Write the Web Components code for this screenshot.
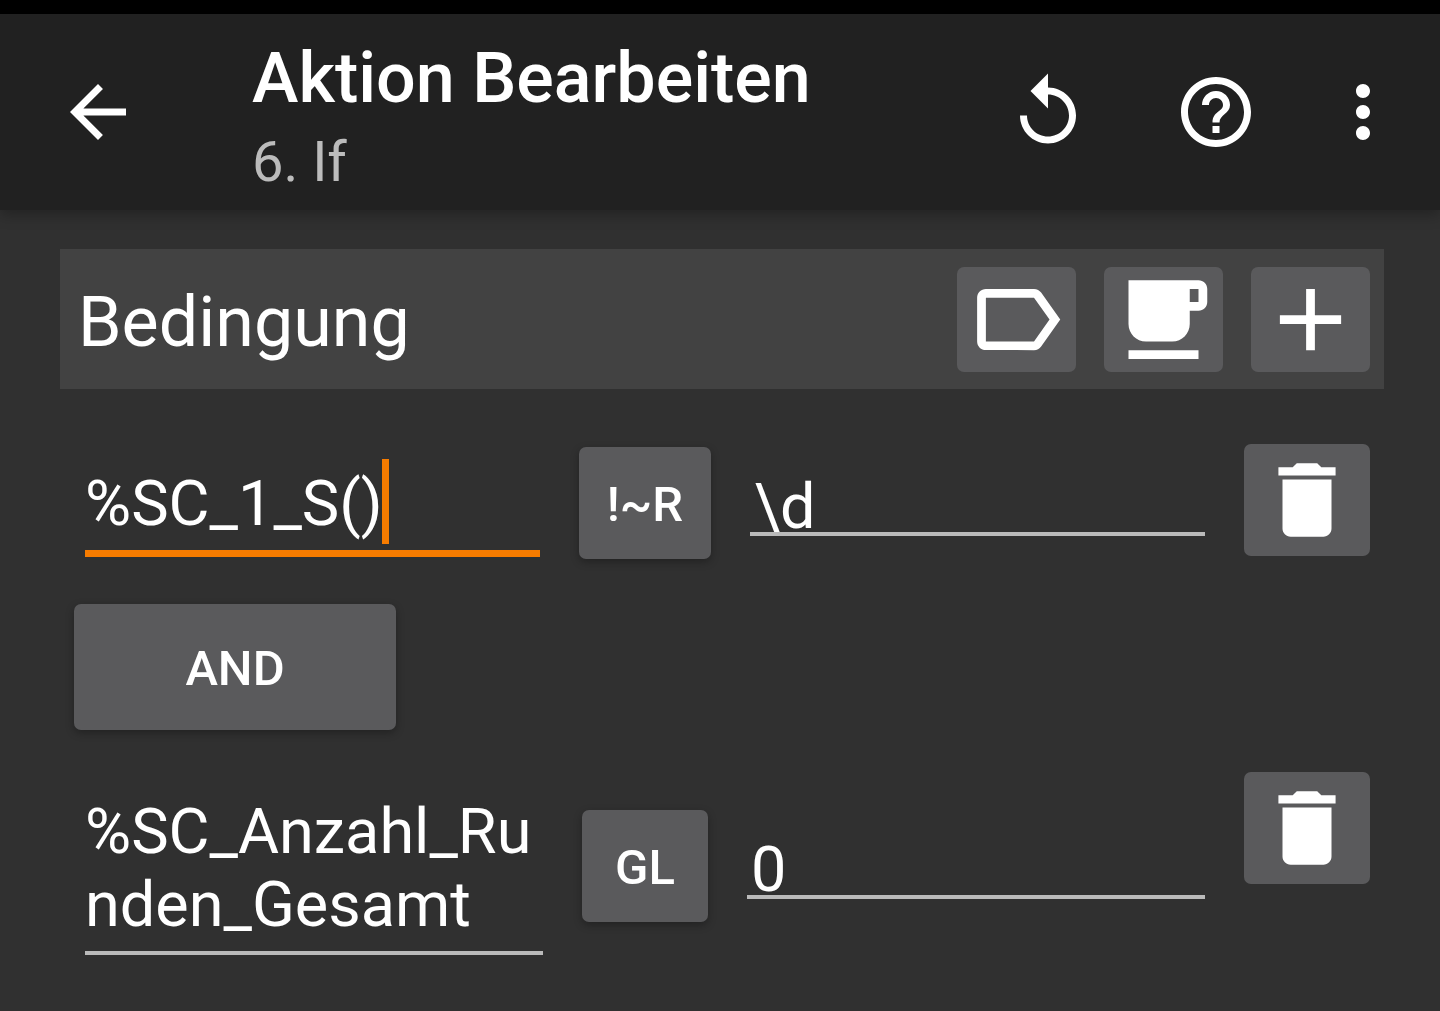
<!DOCTYPE html>
<html lang="de">
<head>
<meta charset="utf-8">
<meta name="viewport" content="width=device-width, initial-scale=1">
<title>Aktion Bearbeiten</title>
<style>
  body {
    margin: 0;
    min-height: 100vh;
    background: #303030;
    color: #fff;
    font-family: Roboto, sans-serif;
    --accent: #f77c00;
    --button: #5a5a5c;
    --line: #bababa;
  }
</style>
</head>
<body>
<te-page>
  <te-app-bar slot="bar">
    <te-tool-button slot="nav" icon="back" label="Zurück"></te-tool-button>
    <span slot="title">Aktion Bearbeiten</span>
    <span slot="subtitle">6. If</span>
    <te-tool-button icon="replay" label="Wiederherstellen"></te-tool-button>
    <te-tool-button icon="help" label="Hilfe"></te-tool-button>
    <te-tool-button class="last" icon="more" label="Weitere Optionen"></te-tool-button>
  </te-app-bar>

  <te-section-head>
    <span slot="title">Bedingung</span>
    <te-button size="small" icon="tag" label="Label"></te-button>
    <te-button size="small" icon="cup" label="Variable"></te-button>
    <te-button size="small" icon="plus" label="Hinzufügen"></te-button>
  </te-section-head>

  <te-conditions>
    <te-condition>
      <te-field lines="1" active value="%SC_1_S()" label="Linker Wert"></te-field>
      <te-button raised>!~R</te-button>
      <te-value value="\d" label="Rechter Wert"></te-value>
      <te-button slot="end" icon="trash" label="Löschen"></te-button>
    </te-condition>
    <te-button size="wide" raised>AND</te-button>
    <te-condition>
      <te-field lines="2" value="%SC_Anzahl_Runden_Gesamt" label="Linker Wert"></te-field>
      <te-button raised>GL</te-button>
      <te-value value="0" label="Rechter Wert"></te-value>
      <te-button slot="end" icon="trash" label="Löschen"></te-button>
    </te-condition>
  </te-conditions>
</te-page>

<script>
const ICONS = {
  back: "M20 11H7.83l5.59-5.59L12 4l-8 8 8 8 1.41-1.41L7.83 13H20v-2z",
  replay: "M12 5V1L7 6l5 5V7c3.31 0 6 2.69 6 6s-2.69 6-6 6-6-2.69-6-6H4c0 4.42 3.58 8 8 8s8-3.58 8-8-3.58-8-8-8z",
  help: "M11 18h2v-2h-2v2zm1-16C6.48 2 2 6.48 2 12s4.48 10 10 10 10-4.48 10-10S17.52 2 12 2zm0 18c-4.41 0-8-3.59-8-8s3.59-8 8-8 8 3.59 8 8-3.59 8-8 8zm0-14c-2.21 0-4 1.79-4 4h2c0-1.1.9-2 2-2s2 .9 2 2c0 2-3 1.75-3 5h2c0-2.25 3-2.5 3-5 0-2.21-1.79-4-4-4z",
  more: "M12 8c1.1 0 2-.9 2-2s-.9-2-2-2-2 .9-2 2 .9 2 2 2zm0 2c-1.1 0-2 .9-2 2s.9 2 2 2 2-.9 2-2-.9-2-2-2zm0 6c-1.1 0-2 .9-2 2s.9 2 2 2 2-.9 2-2-.9-2-2-2z",
  tag: "M17.63 5.84C17.27 5.33 16.67 5 16 5L5 5.01C3.9 5.01 3 5.9 3 7v10c0 1.1.9 1.99 2 1.99L16 19c.67 0 1.27-.33 1.63-.84L22 12l-4.37-6.16zM16 17H5V7h11l3.55 5L16 17z",
  cup: "M20 3H4v10c0 2.21 1.79 4 4 4h6c2.21 0 4-1.79 4-4v-3h2c1.11 0 2-.9 2-2V5c0-1.11-.89-2-2-2zm0 5h-2V5h2v3zM4 19h16v2H4z",
  plus: "M19 13h-6v6h-2v-6H5v-2h6V5h2v6h6v2z",
  trash: "M6 19c0 1.1.9 2 2 2h8c1.1 0 2-.9 2-2V7H6v12zM19 4h-3.5l-1-1h-5l-1 1H5v2h14V4z"
};

function iconSvg(name) {
  return `<svg viewBox="0 0 24 24" aria-hidden="true"><path d="${ICONS[name]}"/></svg>`;
}

class Page extends HTMLElement {
  constructor() {
    super();
    this.attachShadow({ mode: "open" });
    this.shadowRoot.innerHTML = `
    <style>
      :host {
        display: block;
      }
      .status {
        height: 14px;
        background: #000;
      }
      main {
        padding: 39px 56px 42px 60px;
      }
    </style>
    <div class="status"></div>
    <slot name="bar"></slot>
    <main><slot></slot></main>
    `;
  }
}

class AppBar extends HTMLElement {
  constructor() {
    super();
    this.attachShadow({ mode: "open" });
    this.shadowRoot.innerHTML = `
    <style>
      :host {
        display: block;
      }
      header {
        display: flex;
        align-items: center;
        min-height: 196px;
        background: #212121;
        box-shadow: 0 4px 14px rgba(0, 0, 0, 0.3);
      }
      .text {
        flex: 1;
        padding: 8px 0 0 56px;
      }
      h1, p {
        margin: 0;
      }
      h1 {
        font-size: 70px;
        font-weight: 500;
        line-height: 82px;
      }
      p {
        margin-top: 10px;
        font-size: 56px;
        line-height: 66px;
        color: #bcbcbc;
      }
      ::slotted(.last) {
        --pad: 35px 35px 35px 21px;
      }
    </style>
    <header>
      <slot name="nav"></slot>
      <div class="text">
        <h1><slot name="title"></slot></h1>
        <p><slot name="subtitle"></slot></p>
      </div>
      <slot></slot>
    </header>
    `;
  }
}

class ToolButton extends HTMLElement {
  constructor() {
    super();
    this.attachShadow({ mode: "open" });
    this.shadowRoot.innerHTML = `
    <style>
      :host {
        display: block;
      }
      :host([slot="nav"]) {
        --pad: 42px 56px;
      }
      button {
        display: block;
        padding: var(--pad, 42px);
        border: 0;
        background: none;
        color: inherit;
      }
      svg {
        display: block;
        width: 84px;
        fill: currentColor;
      }
    </style>
    <button type="button"></button>
    `;
  }

  connectedCallback() {
    const button = this.shadowRoot.querySelector("button");
    button.setAttribute("aria-label", this.getAttribute("label"));
    button.innerHTML = iconSvg(this.getAttribute("icon"));
  }
}

class SectionHead extends HTMLElement {
  constructor() {
    super();
    this.attachShadow({ mode: "open" });
    this.shadowRoot.innerHTML = `
    <style>
      :host {
        display: flex;
        align-items: center;
        gap: 28px;
        min-height: 140px;
        padding: 0 14px 0 18px;
        box-sizing: border-box;
        background: #424242;
      }
      h2 {
        flex: 1;
        margin: 0;
        padding-top: 6px;
        font-size: 70px;
        font-weight: 400;
        line-height: 82px;
      }
    </style>
    <h2><slot name="title"></slot></h2>
    <slot></slot>
    `;
  }
}

class Button extends HTMLElement {
  constructor() {
    super();
    this.attachShadow({ mode: "open" });
    this.shadowRoot.innerHTML = `
    <style>
      :host {
        display: block;
        flex: none;
      }
      button {
        display: flex;
        align-items: center;
        justify-content: center;
        min-width: 126px;
        height: 112px;
        padding: 4px 28px 0;
        border: 0;
        border-radius: 7px;
        background: var(--button);
        color: inherit;
        font: 500 49px/58px Roboto, sans-serif;
      }
      svg {
        width: 98px;
        flex: none;
        fill: currentColor;
      }
      :host([icon]) button {
        padding: 0 14px;
      }
      :host([raised]) button {
        box-shadow: 0 3px 8px rgba(0, 0, 0, 0.3);
      }
      :host([size="small"]) button {
        min-width: 119px;
        height: 105px;
        padding: 0 7px;
      }
      :host([size="small"]) svg {
        width: 105px;
      }
      :host([size="wide"]) button {
        min-width: 322px;
        height: 126px;
      }
    </style>
    <button type="button"><slot></slot></button>
    `;
  }

  connectedCallback() {
    const button = this.shadowRoot.querySelector("button");
    if (this.hasAttribute("icon")) {
      button.setAttribute("aria-label", this.getAttribute("label"));
      button.innerHTML = iconSvg(this.getAttribute("icon"));
    }
  }
}

class Conditions extends HTMLElement {
  constructor() {
    super();
    this.attachShadow({ mode: "open" });
    this.shadowRoot.innerHTML = `
    <style>
      :host {
        display: flex;
        flex-direction: column;
        align-items: flex-start;
        gap: 42px;
        padding: 55px 14px 0;
      }
    </style>
    <slot></slot>
    `;
  }
}

class Condition extends HTMLElement {
  constructor() {
    super();
    this.attachShadow({ mode: "open" });
    this.shadowRoot.innerHTML = `
    <style>
      :host {
        display: flex;
        align-items: center;
        align-self: stretch;
        gap: 39px;
        padding-left: 11px;
      }
      ::slotted([slot="end"]) {
        align-self: flex-start;
      }
    </style>
    <slot></slot>
    <slot name="end"></slot>
    `;
  }
}

// Wrapping text box, shows a thick caret while active
class Field extends HTMLElement {
  constructor() {
    super();
    this.attachShadow({ mode: "open" });
    this.shadowRoot.innerHTML = `
    <style>
      :host {
        display: block;
        position: relative;
        flex: 1 1 0;
        min-width: 0;
        margin: 5px 0;
      }
      textarea {
        display: block;
        box-sizing: content-box;
        width: 100%;
        margin: 0;
        padding: 18px 0 10px;
        border: 0;
        border-bottom: 4px solid var(--line);
        outline: 0;
        overflow: hidden;
        resize: none;
        background: none;
        color: inherit;
        font: 400 63px/73px Roboto, sans-serif;
        word-break: break-all;
      }
      :host([active]) textarea {
        border-bottom: 7px solid var(--accent);
        caret-color: transparent;
      }
      i {
        display: none;
        position: absolute;
        top: 10px;
        width: 7px;
        height: 85px;
        background: var(--accent);
      }
      :host([active]) i {
        display: block;
      }
    </style>
    <textarea spellcheck="false"></textarea>
    <i></i>
    `;
  }

  connectedCallback() {
    const area = this.shadowRoot.querySelector("textarea");
    area.rows = this.getAttribute("lines");
    area.value = this.getAttribute("value");
    area.setAttribute("aria-label", this.getAttribute("label"));
    area.addEventListener("input", () => this.placeCaret());
    this.placeCaret();
  }

  placeCaret() {
    const area = this.shadowRoot.querySelector("textarea");
    const ctx = document.createElement("canvas").getContext("2d");
    ctx.font = "63px Roboto, sans-serif";
    const width = Math.floor(ctx.measureText(area.value).width);
    this.shadowRoot.querySelector("i").style.left = `${width}px`;
  }
}

class Value extends HTMLElement {
  constructor() {
    super();
    this.attachShadow({ mode: "open" });
    this.shadowRoot.innerHTML = `
    <style>
      :host {
        display: block;
        flex: 1 1 0;
        min-width: 0;
      }
      input {
        display: block;
        box-sizing: border-box;
        width: 100%;
        height: 66px;
        margin: 0;
        padding: 10px 4px 0;
        border: 0;
        border-bottom: 4px solid var(--line);
        outline: 0;
        background: none;
        color: inherit;
        font: 400 63px/52px Roboto, sans-serif;
      }
    </style>
    <input type="text" spellcheck="false">
    `;
  }

  connectedCallback() {
    const input = this.shadowRoot.querySelector("input");
    input.value = this.getAttribute("value");
    input.setAttribute("aria-label", this.getAttribute("label"));
  }
}

customElements.define("te-page", Page);
customElements.define("te-app-bar", AppBar);
customElements.define("te-tool-button", ToolButton);
customElements.define("te-section-head", SectionHead);
customElements.define("te-button", Button);
customElements.define("te-conditions", Conditions);
customElements.define("te-condition", Condition);
customElements.define("te-field", Field);
customElements.define("te-value", Value);
</script>
</body>
</html>
